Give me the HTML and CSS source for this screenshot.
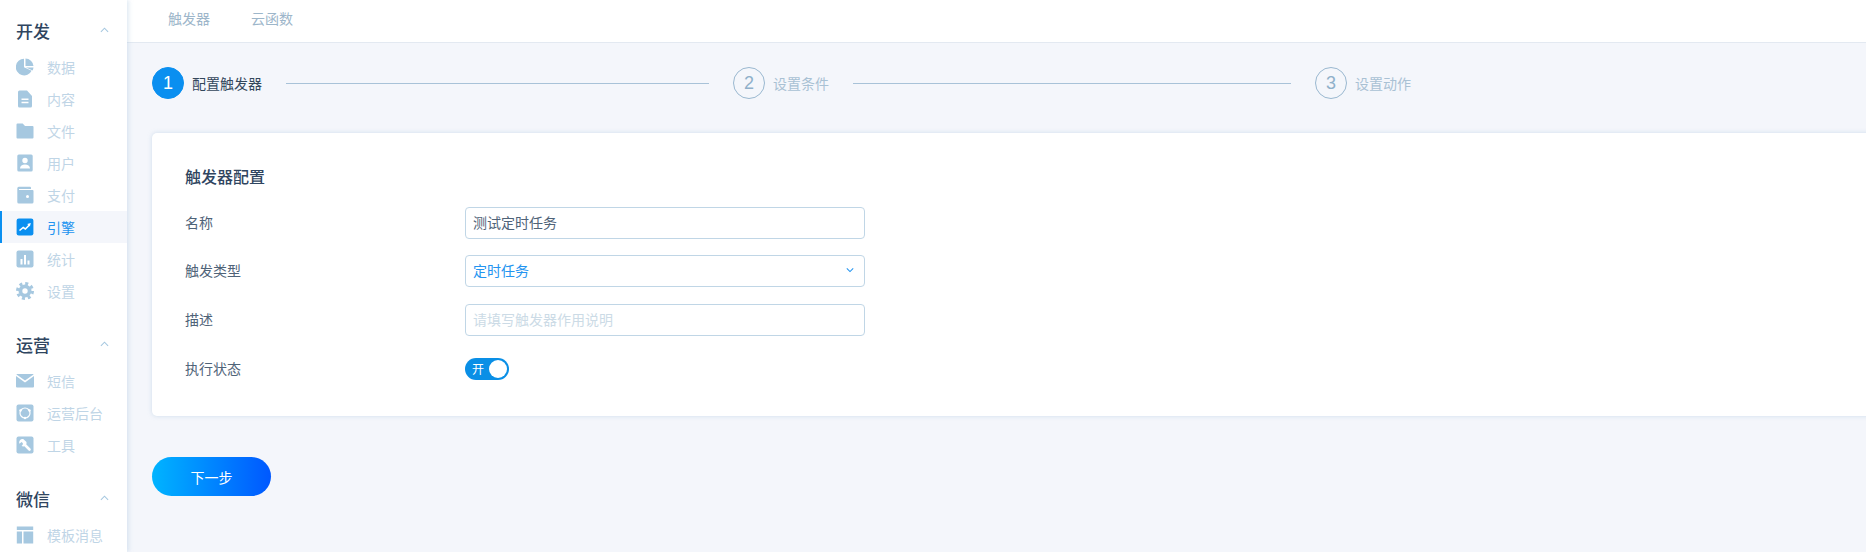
FILE: index.html
```html
<!DOCTYPE html>
<html lang="en">
<head>
    <meta charset="UTF-8">
    <meta name="viewport" content="width=device-width, initial-scale=1.0">
    <title>触发器配置</title>
    <link rel="stylesheet" href="styles.css">
</head>
<body>

    <div class="layout">
        <aside class="sidebar">
            <div class="nav-group">
                <div class="nav-title"><span>开发</span><svg class="chevron" viewBox="0 0 10 6"><path d="M1 5l4-4 4 4"/></svg></div>
                <a class="nav-item"><svg viewBox="0 0 18 18"><path d="M8 .8A8.300 8.300 0 1 0 15.600 12.700L8 9.300z"/><path d="M9.500 .6a8.200 8.200 0 0 1 8 7.400h-8z"/><path d="M10 9.500h7.500a8 8 0 0 1-.9 3z"/></svg><span>数据</span></a>
                <a class="nav-item"><svg viewBox="0 0 18 18"><path fill-rule="evenodd" d="M3.500 .5H11l5 5.500v10a1.500 1.500 0 0 1-1.500 1.500h-11A1.500 1.500 0 0 1 2 16V2A1.500 1.500 0 0 1 3.500 .5zM5.500 8.500V10h7V8.500zm0 3.200v1.500h7v-1.500z"/></svg><span>内容</span></a>
                <a class="nav-item"><svg viewBox="0 0 18 18"><path d="M.5 2.500a1 1 0 0 1 1-1h5.200l2.300 2.400h7.500a1 1 0 0 1 1 1V15.500a1 1 0 0 1-1 1h-15a1 1 0 0 1-1-1z"/></svg><span>文件</span></a>
                <a class="nav-item"><svg viewBox="0 0 18 18"><path fill-rule="evenodd" d="M2.800 .5h12.400a1.500 1.500 0 0 1 1.500 1.500v14a1.500 1.500 0 0 1-1.500 1.500H2.800A1.500 1.500 0 0 1 1.300 16V2A1.500 1.500 0 0 1 2.800 .5zM9 3.800a2.700 2.700 0 1 0 0 5.400 2.700 2.700 0 0 0 0-5.400zM4 14.500h10c0-2.500-2.200-4-5-4s-5 1.500-5 4z"/></svg><span>用户</span></a>
                <a class="nav-item"><svg viewBox="0 0 18 18"><path d="M2.800 .8H14a1 1 0 0 1 1 1V3H3v1h13.500a1 1 0 0 1 1 1v11a1.500 1.500 0 0 1-1.500 1.500H2.800A1.500 1.500 0 0 1 1.300 16V2.300A1.500 1.500 0 0 1 2.800 .8z"/><circle class="cut" cx="11.500" cy="10.500" r="1.500"/></svg><span>支付</span></a>
                <a class="nav-item active"><svg viewBox="0 0 18 18"><rect x=".6" y=".6" width="16.800" height="16.800" rx="2.200"/><path class="cut-line" d="M3.500 12.500l3.700-3 2.200 1.500 4-4"/><path class="cut" d="M14.800 5l-3.600.9 2.700 2.700z"/></svg><span>引擎</span></a>
                <a class="nav-item"><svg viewBox="0 0 18 18"><rect x=".5" y=".5" width="17" height="17" rx="2"/><path class="cut" d="M4.500 9h2v5.500h-2zM8 5h2v9.500H8zM11.500 10.500h2v4h-2z"/></svg><span>统计</span></a>
                <a class="nav-item"><svg viewBox="0 0 18 18"><circle cx="9" cy="9" r="6.500"/><circle class="teeth" cx="9" cy="9" r="7.500"/><circle class="cut" cx="9" cy="9" r="2.700"/></svg><span>设置</span></a>
            </div>
            <div class="nav-group">
                <div class="nav-title"><span>运营</span><svg class="chevron" viewBox="0 0 10 6"><path d="M1 5l4-4 4 4"/></svg></div>
                <a class="nav-item"><svg viewBox="0 0 18 18"><path d="M.8 2h16.400a.8 .8 0 0 1 .3 .4L9 8.500 .5 2.400A.8 .8 0 0 1 .8 2z"/><path d="M0 4l9 6.500L18 4v10.500a1 1 0 0 1-1 1H1a1 1 0 0 1-1-1z"/></svg><span>短信</span></a>
                <a class="nav-item"><svg viewBox="0 0 18 18"><rect x=".5" y=".5" width="17" height="17" rx="2"/><circle class="cut-ring" cx="9" cy="9" r="5"/><circle class="cut" cx="4.500" cy="6.500" r="1.200"/><circle class="cut" cx="13.500" cy="6.500" r="1.200"/><circle class="cut" cx="9" cy="14" r="1.200"/></svg><span>运营后台</span></a>
                <a class="nav-item"><svg viewBox="0 0 18 18"><rect x=".5" y=".5" width="17" height="17" rx="2"/><path class="cut-thick" d="M8 8l5.500 5.500"/><path class="cut" d="M7.200 3a3.500 3.500 0 0 0-3.800 4.800l0 0 2.200-1.900 1.900 1.900-1.900 2.200A3.500 3.500 0 0 0 10.500 6z"/></svg><span>工具</span></a>
            </div>
            <div class="nav-group">
                <div class="nav-title"><span>微信</span><svg class="chevron" viewBox="0 0 10 6"><path d="M1 5l4-4 4 4"/></svg></div>
                <a class="nav-item"><svg viewBox="0 0 18 18"><path d="M.8 .5h16.400v3.500H.8zM.8 5.500h5.200v12H.8zM7.500 5.500h9.700v12H7.500z"/></svg><span>模板消息</span></a>
            </div>
        </aside>

        <div class="main">
            <nav class="tabs">
                <a class="tab">触发器</a>
                <a class="tab">云函数</a>
            </nav>

            <div class="content">
                <div class="steps">
                    <div class="step current"><span class="step-num">1</span><span class="step-label">配置触发器</span></div>
                    <div class="step-line line-one"></div>
                    <div class="step"><span class="step-num">2</span><span class="step-label">设置条件</span></div>
                    <div class="step-line line-two"></div>
                    <div class="step"><span class="step-num">3</span><span class="step-label">设置动作</span></div>
                </div>

                <div class="card">
                    <h2 class="card-title">触发器配置</h2>
                    <div class="form-row">
                        <label class="form-label">名称</label>
                        <div class="field">测试定时任务</div>
                    </div>
                    <div class="form-row">
                        <label class="form-label">触发类型</label>
                        <div class="field select"><span>定时任务</span><svg class="caret" viewBox="0 0 10 6"><path d="M1 1l4 4 4-4"/></svg></div>
                    </div>
                    <div class="form-row">
                        <label class="form-label">描述</label>
                        <div class="field placeholder">请填写触发器作用说明</div>
                    </div>
                    <div class="form-row">
                        <label class="form-label">执行状态</label>
                        <div class="switch"><span>开</span><i class="knob"></i></div>
                    </div>
                </div>

                <button class="next-btn">下一步</button>
            </div>
        </div>
    </div>

</body>
</html>
```

FILE: styles.css
```css
* {
    box-sizing: border-box;
}

html, body {
    height: 100%;
}

body {
    margin: 0;
    font-family: "Noto Sans CJK SC", "Noto Sans", sans-serif;
    font-size: 14px;
    background-color: #f4f6fb;
    color: #33475b;
    overflow: hidden;
}

.layout {
    display: flex;
    height: 552px;
}

.sidebar {
    flex: none;
    width: 127px;
    padding-top: 13px;
    background-color: white;
    box-shadow: 2px 0 4px rgba(170, 198, 224, 0.35);
    z-index: 1;
}

.nav-group {
    margin-bottom: 20px;
}

.nav-title {
    display: flex;
    align-items: center;
    justify-content: space-between;
    height: 34px;
    margin-bottom: 4px;
    padding: 0 18px 0 16px;
    font-size: 17px;
    font-weight: 500;
    color: #2f4560;
}

.chevron {
    width: 9px;
    height: 6px;
    fill: none;
    stroke: #a6c8e0;
    stroke-width: 1.2;
}

.nav-item {
    display: flex;
    align-items: center;
    gap: 13px;
    height: 32px;
    padding-left: 16px;
    color: #bfd5e6;
}

.nav-item svg {
    flex: none;
    width: 18px;
    height: 18px;
    fill: #a6c8e0;
}

.nav-item .cut {
    fill: white;
}

.nav-item .cut-line {
    fill: none;
    stroke: white;
    stroke-width: 1.600;
}

.nav-item .cut-ring {
    fill: none;
    stroke: white;
    stroke-width: 1.200;
}

.nav-item .cut-thick {
    fill: none;
    stroke: white;
    stroke-width: 2.600;
    stroke-linecap: round;
}

.nav-item .teeth {
    fill: none;
    stroke: #a6c8e0;
    stroke-width: 3;
    stroke-dasharray: 3 2.890;
}

.nav-item.active {
    background-color: #f4f6fb;
    border-left: 2px solid #0a8ff0;
    padding-left: 14px;
    color: #2394f0;
}

.nav-item.active svg {
    fill: #0a8ff0;
}

.main {
    flex: 1;
    min-width: 0;
}

.tabs {
    display: flex;
    gap: 41px;
    height: 43px;
    padding: 0 0 6px 41px;
    background-color: white;
    border-bottom: 1px solid #e3e9f1;
    align-items: center;
    color: #9db6ca;
}

.content {
    padding: 24px 0 0 25px;
}

.steps {
    display: flex;
    align-items: center;
    height: 32px;
}

.step {
    display: flex;
    align-items: center;
    gap: 8px;
    color: #a9c1d4;
}

.step-num {
    display: flex;
    align-items: center;
    justify-content: center;
    width: 32px;
    height: 32px;
    border: 1px solid #9ab8d0;
    border-radius: 50%;
    font-family: "Liberation Sans", Arial, sans-serif;
    font-size: 18px;
    color: #8fb0ca;
}

.step.current {
    color: #33475b;
}

.step.current .step-num {
    background-color: #0a8ff0;
    border-color: #0a8ff0;
    color: white;
}

.step-line {
    height: 1px;
    background-color: #a8c2d8;
    margin: 0 24px;
}

.line-one {
    width: 423px;
}

.line-two {
    width: 438px;
}

.card {
    width: 1800px;
    height: 283px;
    margin-top: 34px;
    padding: 29px 33px;
    background-color: white;
    border-radius: 5px;
    box-shadow: 0 0 4px rgba(170, 198, 224, 0.5);
}

.card-title {
    margin: 0 0 16.900px;
    font-size: 16px;
    font-weight: 500;
    line-height: 28px;
    color: #2f4560;
}

.form-row {
    display: flex;
    align-items: center;
    height: 32px;
    margin-bottom: 16.550px;
}

.form-label {
    width: 280px;
    padding-bottom: 2px;
    color: #4f6378;
}

.field {
    display: flex;
    align-items: center;
    justify-content: space-between;
    width: 400px;
    height: 32px;
    padding: 0 7px 2px;
    border: 1px solid #c0d6e6;
    border-radius: 4px;
    color: #4f6378;
}

.field.select {
    color: #2394f0;
}

.field.placeholder {
    color: #ccdbe6;
}

.caret {
    width: 8px;
    height: 6px;
    margin-right: 3px;
    fill: none;
    stroke: #2394f0;
    stroke-width: 1.300;
}

.switch {
    display: flex;
    align-items: center;
    justify-content: space-between;
    width: 44px;
    height: 22px;
    padding: 0 2px 0 7px;
    border-radius: 11px;
    background-color: #0a8fe6;
    color: white;
    font-size: 12px;
}

.knob {
    width: 18px;
    height: 18px;
    border-radius: 50%;
    background-color: white;
}

.next-btn {
    display: block;
    width: 119px;
    height: 39px;
    margin-top: 41px;
    border: none;
    border-radius: 20px;
    background: linear-gradient(90deg, #00b4ff, #0058ff);
    color: white;
    font-family: inherit;
    font-size: 14px;
}
```
